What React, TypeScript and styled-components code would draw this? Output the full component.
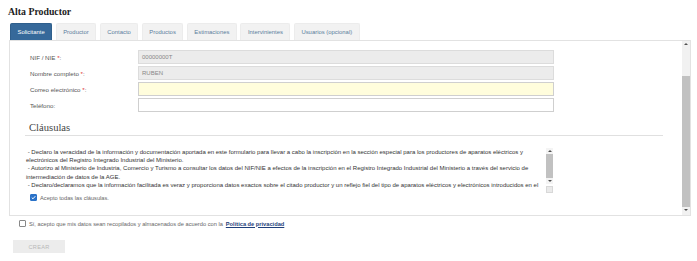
import React from 'react';
import styled, { createGlobalStyle } from 'styled-components';

const GlobalStyle = createGlobalStyle`
  html, body {
    margin: 0;
    padding: 0;
    background: #ffffff;
  }
  body {
    font-family: 'Liberation Sans', Arial, sans-serif;
    color: #555;
  }
`;

const Page = styled.div`
  width: 697px;
  height: 261px;
  padding: 6px 6px 0 9px;
  box-sizing: border-box;
`;

const Title = styled.h1`
  margin: 0 0 5px -1px;
  font-family: 'Liberation Serif', 'Times New Roman', serif;
  font-size: 9.8px;
  line-height: 12px;
  font-weight: bold;
  color: #222;
`;

const Tabs = styled.div`
  display: flex;
  gap: 3.5px;
  padding-left: 1px;
  height: 17px;
`;

const Tab = styled.div<{ $active?: boolean }>`
  display: flex;
  align-items: center;
  padding: 0 6.5px;
  font-size: 5.9px;
  border-radius: 2px 2px 0 0;
  background: ${(p) => (p.$active ? '#36699a' : '#f2f2f2')};
  color: ${(p) => (p.$active ? '#ffffff' : '#5b7d9c')};
  border: 1px solid ${(p) => (p.$active ? '#2f5f8c' : '#ececec')};
  border-bottom: none;
`;

const Panel = styled.div`
  display: flex;
  width: 682px;
  height: 176px;
  border: 1px solid #e2e2e2;
  box-sizing: border-box;
`;

const PanelBody = styled.div`
  flex: 1;
  padding: 9px 0 0 15px;
`;

const ScrollTrack = styled.div<{ $w: number }>`
  width: ${(p) => p.$w}px;
  background: #f1f1f1;
  display: flex;
  flex-direction: column;
  align-items: center;
`;

const Arrow = styled.div<{ $down?: boolean }>`
  width: 0;
  height: 0;
  margin: 2px 0;
  border-left: 2px solid transparent;
  border-right: 2px solid transparent;
  ${(p) =>
    p.$down ? 'border-top: 2px solid #505050;' : 'border-bottom: 2px solid #505050;'}
`;

const Thumb = styled.div<{ $top: number; $h: number }>`
  width: 100%;
  margin-top: ${(p) => p.$top}px;
  height: ${(p) => p.$h}px;
  background: #c1c1c1;
`;

const FormRow = styled.div`
  display: flex;
  align-items: center;
  height: 14px;
  margin-bottom: 2px;
  padding-left: 5px;
`;

const Label = styled.div`
  width: 108px;
  font-size: 6.2px;
  color: #555;
`;

const Req = styled.span`
  color: #d33;
`;

const Input = styled.div<{ $tone: 'grey' | 'yellow' | 'white' }>`
  width: 416px;
  height: 14px;
  box-sizing: border-box;
  border: 1px solid ${(p) => (p.$tone === 'grey' ? '#dcdcdc' : '#cfcfcf')};
  background: ${(p) =>
    p.$tone === 'grey' ? '#ececec' : p.$tone === 'yellow' ? '#fffddc' : '#ffffff'};
  font-size: 6px;
  color: #888;
  display: flex;
  align-items: center;
  padding-left: 3px;
`;

const Section = styled.div`
  width: 638px;
  margin-top: 8px;
  border-bottom: 1px solid #e0e0e0;
  padding: 1px 0 1px 4px;
  box-sizing: border-box;
`;

const SectionTitle = styled.h2`
  margin: 0;
  font-family: 'Liberation Serif', 'Times New Roman', serif;
  font-weight: normal;
  font-size: 10.6px;
  line-height: 13px;
  color: #444;
`;

const ClauseBox = styled.div`
  display: flex;
  width: 528px;
  height: 45px;
  margin-top: 12px;
`;

const ClauseText = styled.div`
  width: 517px;
  height: 41px;
  overflow: hidden;
  font-size: 6px;
  line-height: 8.2px;
  color: #333;
  padding-left: 1px;
  p {
    margin: 0;
  }
`;

const MiniTrack = styled(ScrollTrack)`
  background: #f4f4f4;
  height: 36px;
`;

const Grip = styled.div`
  width: 7px;
  height: 7px;
  margin-top: 2px;
  background: #eaeaea;
  border: 1px solid #d8d8d8;
  box-sizing: border-box;
`;

const MiniCol = styled.div`
  display: flex;
  flex-direction: column;
  margin-left: auto;
`;

const CheckRow = styled.label<{ $indent: number; $top: number }>`
  display: flex;
  align-items: center;
  gap: 3px;
  margin-top: ${(p) => p.$top}px;
  padding-left: ${(p) => p.$indent}px;
  font-size: 5.7px;
  color: #666;
`;

const Box = styled.span<{ $checked?: boolean }>`
  width: 7px;
  height: 7px;
  box-sizing: border-box;
  border-radius: 1px;
  display: inline-flex;
  align-items: center;
  justify-content: center;
  background: ${(p) => (p.$checked ? '#2a72c8' : '#fff')};
  border: 1px solid ${(p) => (p.$checked ? '#2a72c8' : '#888')};
`;

const PrivacyLink = styled.a`
  color: #1f3f7a;
  font-weight: bold;
  text-decoration: underline;
`;

const CreateButton = styled.button`
  margin: 13px 0 0 4px;
  width: 52px;
  height: 13px;
  border: none;
  background: #ececec;
  color: #b8b8b8;
  font-family: 'Liberation Sans', Arial, sans-serif;
  font-size: 5.6px;
  letter-spacing: 0.3px;
  padding: 0;
`;

const Check = () => (
  <svg width="5" height="5" viewBox="0 0 10 10">
    <path d="M1.5 5.2 L4 7.6 L8.6 2.4" fill="none" stroke="#fff" strokeWidth="2" />
  </svg>
);

const tabs = [
  'Solicitante',
  'Productor',
  'Contacto',
  'Productos',
  'Estimaciones',
  'Intervinientes',
  'Usuarios (opcional)',
];

const App: React.FC = () => (
  <Page>
    <GlobalStyle />
    <Title>Alta Productor</Title>
    <Tabs>
      {tabs.map((t, i) => (
        <Tab key={t} $active={i === 0}>
          {t}
        </Tab>
      ))}
    </Tabs>
    <Panel>
      <PanelBody>
        <FormRow>
          <Label>
            NIF / NIE <Req>*</Req>:
          </Label>
          <Input $tone="grey">00000000T</Input>
        </FormRow>
        <FormRow>
          <Label>
            Nombre completo <Req>*</Req>:
          </Label>
          <Input $tone="grey">RUBEN</Input>
        </FormRow>
        <FormRow>
          <Label>
            Correo electrónico <Req>*</Req>:
          </Label>
          <Input $tone="yellow" />
        </FormRow>
        <FormRow>
          <Label>Teléfono:</Label>
          <Input $tone="white" />
        </FormRow>

        <Section>
          <SectionTitle>Cláusulas</SectionTitle>
        </Section>

        <ClauseBox>
          <ClauseText>
            <p>
              &nbsp;- Declaro la veracidad de la información y documentación aportada en este
              formulario para llevar a cabo la inscripción en la sección especial para los
              productores de aparatos eléctricos y electrónicos del Registro Integrado Industrial
              del Ministerio.
            </p>
            <p>
              &nbsp;- Autorizo al Ministerio de Industria, Comercio y Turismo a consultar los datos
              del NIF/NIE a efectos de la inscripción en el Registro Integrado Industrial del
              Ministerio a través del servicio de intermediación de datos de la AGE.
            </p>
            <p>
              &nbsp;- Declaro/declaramos que la información facilitada es veraz y proporciona datos
              exactos sobre el citado productor y un reflejo fiel del tipo de aparatos eléctricos y
              electrónicos introducidos en el
            </p>
          </ClauseText>
          <MiniCol>
            <MiniTrack $w={7}>
              <Arrow />
              <Thumb $top={0} $h={26} />
              <Arrow $down />
            </MiniTrack>
            <Grip />
          </MiniCol>
        </ClauseBox>

        <CheckRow $indent={5} $top={1}>
          <Box $checked>
            <Check />
          </Box>
          Acepto todas las cláusulas.
        </CheckRow>
      </PanelBody>
      <ScrollTrack $w={8}>
        <Arrow />
        <Thumb $top={29} $h={131} />
        <Arrow $down />
      </ScrollTrack>
    </Panel>

    <CheckRow $indent={10} $top={4}>
      <Box />
      Sí, acepto que mis datos sean recopilados y almacenados de acuerdo con la{' '}
      <PrivacyLink>Política de privacidad</PrivacyLink>
    </CheckRow>

    <CreateButton disabled>CREAR</CreateButton>
  </Page>
);

export default App;
